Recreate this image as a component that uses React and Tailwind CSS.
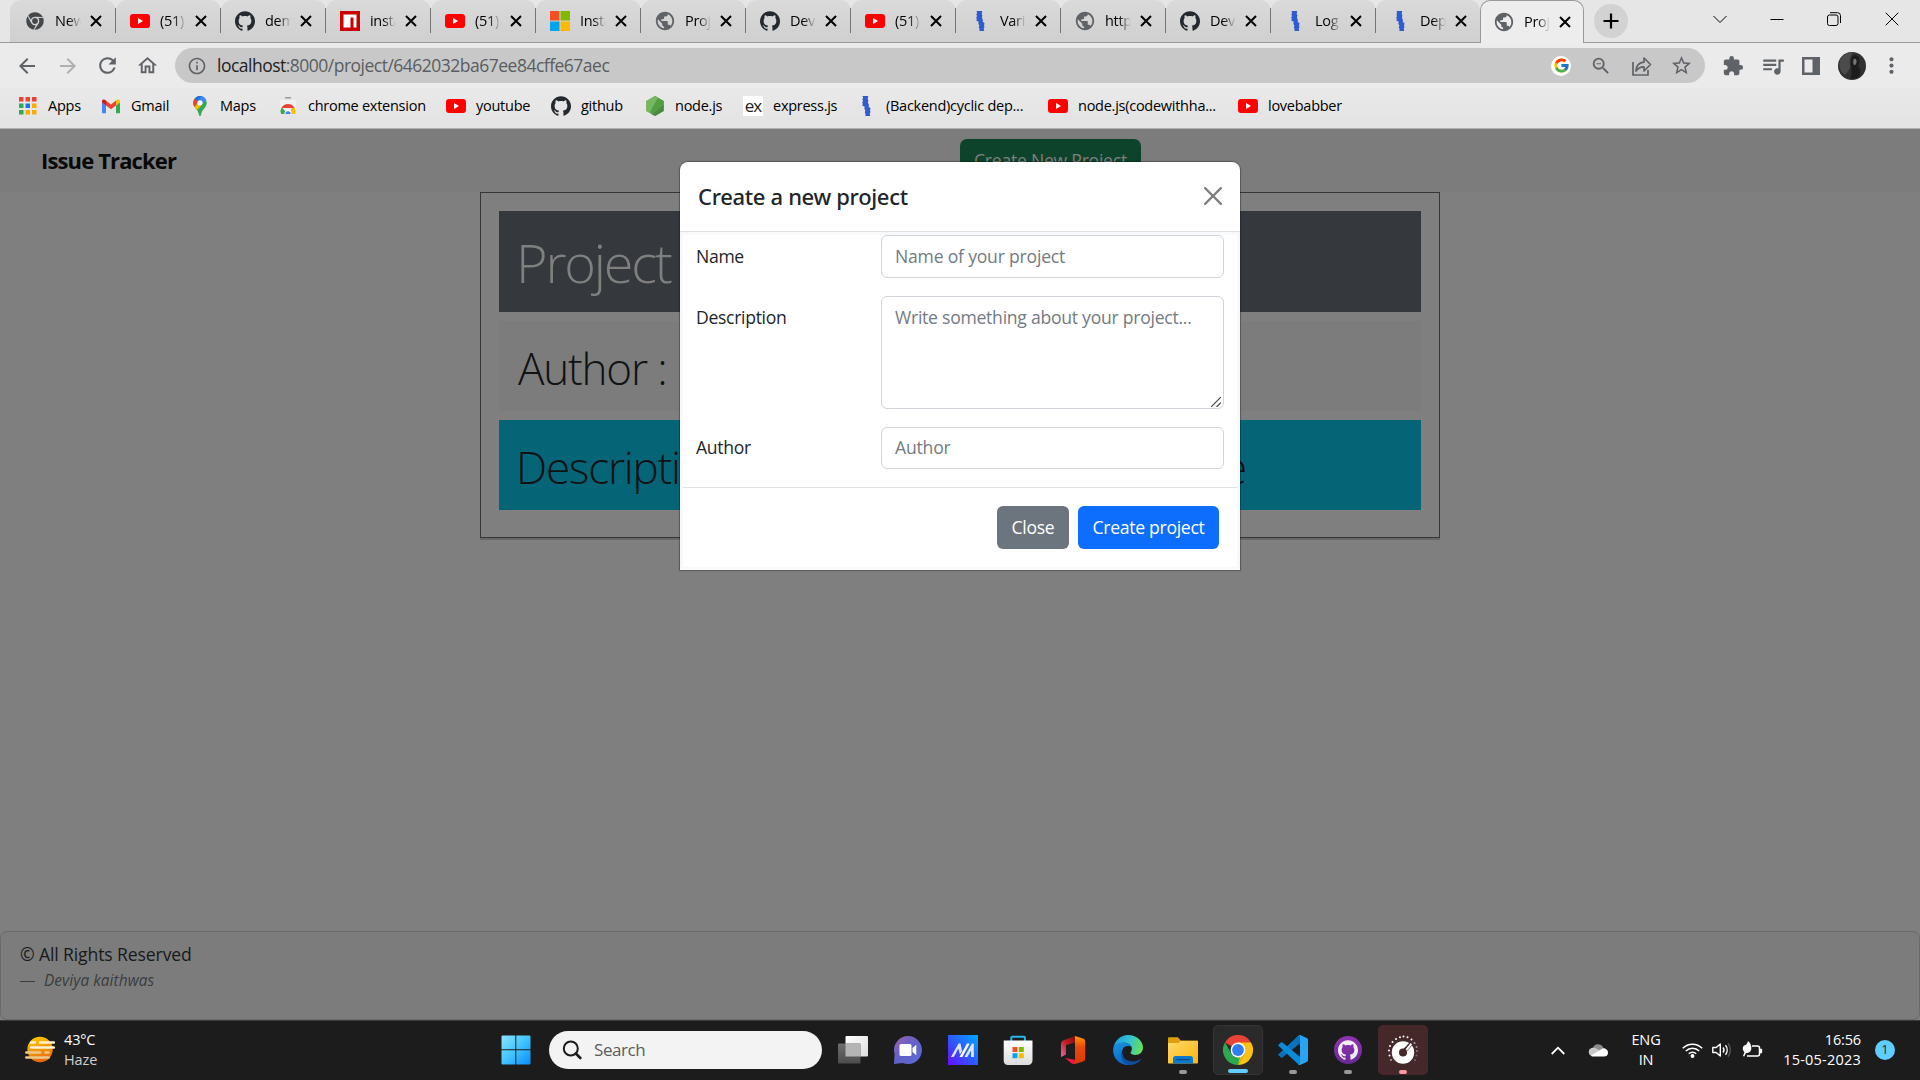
import React from 'react';
import { FaChrome } from 'react-icons/fa';
import { SiGithub } from 'react-icons/si';
import { FcGoogle } from 'react-icons/fc';
import {
  MdPublic, MdArrowBack, MdArrowForward, MdRefresh, MdOutlineHome, MdInfoOutline, MdZoomOut,
  MdStarBorder, MdExtension, MdQueueMusic, MdMoreVert,
} from 'react-icons/md';

/* ---------- small brand icons ---------- */

const YouTube = () => (
  <svg width="20" height="20" viewBox="0 0 20 20">
    <rect x="0" y="3" width="20" height="14" rx="3" fill="#f00" />
    <path d="M8 7l5 3-5 3z" fill="#fff" />
  </svg>
);

const Npm = () => (
  <svg width="20" height="20" viewBox="0 0 20 20">
    <rect width="20" height="20" fill="#cb0000" />
    <path d="M3.5 3.5h13v13h-3v-10h-3v10h-7z" fill="#fff" />
  </svg>
);

const Microsoft = () => (
  <svg width="20" height="20" viewBox="0 0 20 20">
    <rect width="9.5" height="9.5" fill="#f25022" />
    <rect x="10.5" width="9.5" height="9.5" fill="#7fba00" />
    <rect y="10.5" width="9.5" height="9.5" fill="#00a4ef" />
    <rect x="10.5" y="10.5" width="9.5" height="9.5" fill="#ffb900" />
  </svg>
);

const Pen = () => (
  <svg width="20" height="20" viewBox="0 0 20 20">
    <path d="M6.5 0h5.700l-.5 3 .7 1.500-.5 2 1 2.500-.2 2 1.800 1-.5 2.500.5 1.500-.8 1.500.5 2.500H9.400l.2-2-.8-1.500.6-2-1-1.500.2-2.500-2.300-.8.500-1.700-.6-1.500.9-1.500-.8-1.500.8-1.500z" fill="#2f5bd0" />
  </svg>
);

const Globe = () => <MdPublic size={22} className="-m-px text-[#5f6368]" />;
const Github = () => <SiGithub size={20} className="text-[#24292f]" />;
const ChromeMono = () => <FaChrome size={18} className="text-[#45484b]" />;

const AppsGrid = () => (
  <svg width="18" height="18" viewBox="0 0 18 18">
    {[
      [0, 0, '#ea4335'], [6.5, 0, '#ea4335'], [13, 0, '#ea4335'],
      [0, 6.5, '#34a853'], [6.5, 6.5, '#1a73e8'], [13, 6.5, '#fbab04'],
      [0, 13, '#34a853'], [6.5, 13, '#fbab04'], [13, 13, '#fbab04'],
    ].map(([x, y, c]) => <rect key={`${x}-${y}`} x={x} y={y} width="4.5" height="4.5" fill={c} />)}
  </svg>
);

const Gmail = () => (
  <svg width="20" height="20" viewBox="0 0 20 20">
    <path d="M1 6v10.2c0 .6.4 1 1 1h3V9.4z" fill="#4285f4" />
    <path d="M19 6v10.2c0 .6-.4 1-1 1h-3V9.4z" fill="#34a853" />
    <path d="M5 4.6v4.8l5 3.8 5-3.8V4.6l-5 3.8z" fill="#ea4335" />
    <path d="M1 5v1.4l4 3V4.6l-.9-.7C2.800 3 1 3.600 1 5z" fill="#c5221f" />
    <path d="M19 5v1.400l-4 3V4.600l.9-.7C17.200 3 19 3.600 19 5z" fill="#fbbc04" />
  </svg>
);

const Maps = () => (
  <svg width="20" height="20" viewBox="0 0 20 20">
    <path d="M10 0a6.800 6.800 0 0 1 6.800 6.800c0 4.800-5 6.200-5.800 12.400-.2 1-1.800 1-2 0C8.200 13 3.200 11.600 3.200 6.800A6.800 6.800 0 0 1 10 0z" fill="#34a853" />
    <path d="M4.600 11C3.600 9.600 3.200 8.500 3.200 6.800c0-1.700.6-3.200 1.600-4.400l3.600 3z" fill="#ea4335" />
    <path d="M4.800 2.400A6.800 6.800 0 0 1 12 .3L8 5.200z" fill="#1a73e8" />
    <path d="M12 .3c1.700.5 3.200 1.700 4 3.300l-4.200 5-3.400-3.800z" fill="#4285f4" />
    <path d="M4.600 11l4-5 3.200 3L6.900 14c-.9-1.200-1.700-2-2.300-3z" fill="#fbbc04" />
    <circle cx="10" cy="6.800" r="2.600" fill="#fff" />
  </svg>
);

const WebStore = () => (
  <svg width="20" height="20" viewBox="0 0 20 20">
    <rect x="7" y="1" width="6" height="1.500" fill="#9a9a9a" />
    <rect x="2" y="4" width="16" height="14" fill="#f0f0f0" />
    <path d="M3 18a7 7 0 0 1 .8-6.500L8 16v2z" fill="#34a853" />
    <path d="M3.500 12a7.200 7.200 0 0 1 13 0z" fill="#ea4335" />
    <path d="M12 18l1.500-6h3.200a7 7 0 0 1 .6 6z" fill="#fbbc04" />
    <path d="M3.500 12l3 5h-3.500a7 7 0 0 1 .5-5z" fill="#34a853" />
    <path d="M6.500 18a3.600 3.600 0 1 1 7 0z" fill="#fff" />
    <path d="M7.300 18a2.700 2.700 0 1 1 5.400 0z" fill="#4285f4" />
  </svg>
);

const NodeJs = () => (
  <svg width="20" height="20" viewBox="0 0 20 20">
    <path d="M10 0l8.700 5v10L10 20l-8.700-5V5z" fill="#5fa04e" />
    <path d="M10 0l8.700 5v5L8 19l-2-1.300z" fill="#539e43" />
    <path d="M1.300 5L10 0l3 1.700L4.500 16.800 1.300 15z" fill="#75b85f" />
    <path d="M18.700 9v6L10 20l-2.500-1.500z" fill="#4a8a3e" />
  </svg>
);

const Express = () => (
  <span className="flex h-5 w-5 items-center justify-center bg-white text-[17px] leading-none tracking-[-0.05em] text-[#222]">
    <span className="-mt-0.5">ex</span>
  </span>
);

/* ---------- browser chrome ---------- */

const tabs = [
  ['New', ChromeMono], ['(51)', YouTube], ['dem', Github], ['insta', Npm], ['(51)', YouTube],
  ['Insta', Microsoft], ['Proj', Globe], ['Dev', Github], ['(51)', YouTube], ['Vari', Pen],
  ['http', Globe], ['Dev', Github], ['Log', Pen], ['Dep', Pen],
];

const fade = '[mask-image:linear-gradient(to_right,#000_50%,transparent_100%)]';

function TabBody({ title, Icon }) {
  return (
    <>
      <span className="flex h-5 w-5 shrink-0 items-center justify-center"><Icon /></span>
      <span className={`ml-[10px] w-[26px] shrink-0 overflow-hidden whitespace-nowrap text-[14.5px] tracking-[-0.02em] ${fade}`}>{title}</span>
      <svg width="12" height="12" viewBox="0 0 12 12" stroke="#000" strokeWidth="2" className="ml-[9px] mt-px shrink-0"><path d="M1 1l10 10M11 1L1 11" /></svg>
    </>
  );
}

function TabStrip() {
  return (
    <div className="relative flex h-[43px] bg-[#e6e6e6] pl-[10px]">
      <div className="absolute inset-x-0 bottom-0 h-px bg-[#9a9a9a]" />
      {tabs.map(([title, Icon], i) => (
        <div
          key={i}
          className={`flex h-[42px] shrink-0 items-center rounded-t-[11px] bg-linear-to-b from-[#dadada] to-[#cfcfcf] pb-px ${
            i === 0 ? 'w-[106px] pl-[15px]' : i === 13 ? 'w-[104px] pl-[14px]' : 'w-[105px] pl-[14px]'
          }`}
        >
          <TabBody title={title} Icon={Icon} />
          {i < 13 && <span className="ml-auto h-[25px] w-px bg-[#747474]" />}
        </div>
      ))}
      <div className="relative flex h-[43px] w-[104px] shrink-0 items-center rounded-t-[10px] border border-b-0 border-[#9a9a9a] bg-[#ededed] pb-px pl-[13px]">
        <TabBody title="Proj" Icon={Globe} />
      </div>
      <div className="ml-[10px] mt-1 flex h-[34px] w-[34px] items-center justify-center rounded-full bg-[#d2d2d2]">
        <svg width="16" height="16" viewBox="0 0 16 16" stroke="#000" strokeWidth="2.200"><path d="M8 .5v15M.5 8h15" /></svg>
      </div>
      <div className="ml-auto mr-[21px] flex h-[38px] items-center text-black">
        <svg width="14" height="14" viewBox="0 0 14 14" fill="none" stroke="currentColor"><path d="M.5 4l6.500 6.500L13.500 4" /></svg>
        <svg width="14" height="14" viewBox="0 0 14 14" fill="none" stroke="currentColor" className="ml-[43px]"><path d="M.5 7.500h13" /></svg>
        <svg width="14" height="14" viewBox="0 0 14 14" fill="none" stroke="currentColor" className="ml-[43px]"><rect x=".5" y="3" width="10.500" height="10.500" rx="2" /><path d="M3 .7h7.500a3 3 0 0 1 3 3V11" /></svg>
        <svg width="14" height="14" viewBox="0 0 14 14" fill="none" stroke="currentColor" className="ml-[44px]"><path d="M.7.7l12.600 12.600M13.300.7L.7 13.300" /></svg>
      </div>
    </div>
  );
}

function Toolbar() {
  return (
    <div className="flex h-[45px] items-center bg-[#ebebeb] text-[#5f6368]">
      <MdArrowBack size={24} className="ml-[15px]" />
      <MdArrowForward size={24} className="ml-[17px] text-[#b0b0b0]" />
      <MdRefresh size={25} className="ml-[15px]" />
      <MdOutlineHome size={23} className="ml-[16px]" />
      <div className="ml-[16px] flex h-[35px] w-[1530px] shrink-0 items-center rounded-full bg-[#c8c8c8] pl-[12px]">
        <MdInfoOutline size={20} />
        <span className="ml-[10px] text-[17.5px] tracking-[-0.029em] text-[#5a5d61]">
          <span className="text-[#222]">localhost</span>:8000/project/6462032ba67ee84cffe67aec
        </span>
        <span className="ml-auto flex h-5 w-5 items-center justify-center rounded-full bg-white"><FcGoogle size={17} /></span>
        <MdZoomOut size={22} className="ml-[19px]" />
        <svg width="22" height="22" viewBox="0 0 22 22" fill="none" stroke="currentColor" strokeWidth="1.700" className="ml-[18px]">
          <path d="M3 7v13h15v-5" />
          <path d="M6 16c.3-5.500 3-8.500 8-8.800V3l6.500 6.500L14 16v-4.200c-4-.1-6 1.200-8 4.200z" strokeLinejoin="round" />
        </svg>
        <MdStarBorder size={23} className="ml-[18px] mr-[12px]" />
      </div>
      <MdExtension size={22} className="ml-[17px]" />
      <MdQueueMusic size={26} className="ml-[16px]" />
      <svg width="18" height="18" viewBox="0 0 18 18" className="ml-[16px]"><path d="M0 0h18v18H0zM2.500 2.500v13h8v-13z" fill="currentColor" fillRule="evenodd" /></svg>
      <svg width="28" height="28" viewBox="0 0 28 28" className="ml-[18px]">
        <circle cx="14" cy="14" r="14" fill="#303030" />
        <path d="M5 4c4-4 8-4 10-4-3 5-4 9-3 13s-3 7-5 10C1 19-1 10 5 4z" fill="#4b4b4b" />
        <path d="M14 5c2-3 6-2 7 1s0 6-1 8c3 3 3 7 1 11-3 2-7 2-9 1 3-5 1-9 1-13 0-3 0-5 1-8z" fill="#1c1c1c" />
        <path d="M16 7c1.500-1 3 1 2.500 3.500S16 14 15.500 12 15 8 16 7z" fill="#777" />
      </svg>
      <MdMoreVert size={25} className="ml-[13px]" />
    </div>
  );
}

const bookmarks = [
  [AppsGrid, 'Apps', 'w-[83px]'], [Gmail, 'Gmail', 'w-[89px]'], [Maps, 'Maps', 'w-[88px]'],
  [WebStore, 'chrome extension', 'w-[168px]'], [YouTube, 'youtube', 'w-[105px]'], [Github, 'github', 'w-[94px]'],
  [NodeJs, 'node.js', 'w-[98px]'], [Express, 'express.js', 'w-[113px]'], [Pen, '(Backend)cyclic dep...', 'w-[192px]'],
  [YouTube, 'node.js(codewithha...', 'w-[190px]'], [YouTube, 'lovebabber', 'w-[120px]'],
];

function Bookmarks() {
  return (
    <div className="flex h-[41px] items-center border-b border-[#b0b0b0] bg-linear-to-b from-[#e9e9e9] to-[#e3e3e3] pb-1 pl-[18px]">
      {bookmarks.map(([Icon, label, w], i) => (
        <div key={i} className={`flex shrink-0 items-center gap-[10px] ${w}`}>
          <span className="flex w-5 shrink-0 items-center justify-center"><Icon /></span>
          <span className="whitespace-nowrap text-[14.5px] tracking-[-0.018em] text-black">{label}</span>
        </div>
      ))}
    </div>
  );
}

/* ---------- page ---------- */

function Page() {
  return (
    <div className="flex h-[891px] flex-col bg-[#7f7f7f] text-[#101214]">
      <div className="flex h-[63px] shrink-0 items-start bg-[#7c7c7c] pl-[41px]">
        <div className="mt-[15px] w-[919px] text-[22px] font-bold leading-[33px] tracking-[-0.039em] text-[#080808]">Issue Tracker</div>
        <div className="mt-[10px] h-[42px] w-[181px] rounded-[7px] bg-[#0d432a] text-center text-[17.6px] leading-[42px] tracking-[-0.014em] text-[#7f7f7f]">Create New Project</div>
      </div>
      <div className="mx-auto flex h-[346px] w-[960px] shrink-0 flex-col border border-[#34373a] px-[18px] pt-[18px] font-light shadow-[0_2px_0_#686868]">
        <div className="h-[101px] bg-[#35393e] pl-[17px] text-[54px] leading-[103px] tracking-[-0.040em] text-[#7f7f7f]">Project</div>
        <div className="mt-[9px] h-[90px] bg-[#7c7c7c] pl-[19px] text-[44px] leading-[95px] tracking-[-0.027em]">Author :</div>
        <div className="mt-[9px] flex h-[90px] justify-between bg-[#056577] pl-[17px] pr-[175px] text-[44px] leading-[95px] tracking-[-0.027em]">
          <span>Description :</span><span>Issue Tracker website</span>
        </div>
      </div>
      <div className="mt-auto h-[89px] rounded-[7px] border border-[#6a6a6a] bg-[#7c7c7c] pl-[19px] pt-[9px]">
        <div className="text-[17.6px] leading-[26px] tracking-[-0.007em] text-[#17191b]">© All Rights Reserved</div>
        <div className="flex items-center text-[15.400px] leading-[28px] tracking-[0.005em] text-[#3a3d40]">
          <span className="h-px w-[15px] bg-[#3a3d40]" /><span className="ml-[9px] italic">Deviya kaithwas</span>
        </div>
      </div>
    </div>
  );
}

const field = 'w-[343px] shrink-0 rounded-[6px] border border-[#ced4da] bg-white pl-[13px] text-[#737a81] tracking-[-0.012em]';

function Modal() {
  return (
    <div className="absolute left-[680px] top-[162px] h-[408px] w-[560px] rounded-t-[8px] bg-white text-[17.6px] text-[#212529] shadow-[0_0_1px_1px_rgba(0,0,0,0.3)]">
      <div className="flex h-[70px] items-start justify-between border-b border-[#dee2e6] pl-[18px] pr-[18px]">
        <div className="pt-[17px] font-['Noto_Sans',sans-serif] text-[22px] font-medium leading-[34px] tracking-[-0.015em]">Create a new project</div>
        <svg width="18" height="18" viewBox="0 0 18 18" fill="none" stroke="#7f7f7f" strokeWidth="2.200" strokeLinecap="round" className="mt-[25px]"><path d="M1.100 1.100l15.800 15.800M16.900 1.100L1.100 16.900" /></svg>
      </div>
      <div className="h-[338px] border-[3px] border-[#f8f9fa]">
        <div className="flex h-[61px] pl-[13px] leading-[42px]">
          <div className="w-[185px] tracking-[-0.018em]">Name</div>
          <div className={`${field} h-[43px] leading-[41px]`}>Name of your project</div>
        </div>
        <div className="flex h-[131px] pl-[13px] leading-[42px]">
          <div className="w-[185px] tracking-[-0.018em]">Description</div>
          <div className={`${field} flex h-[113px] leading-[41px]`}>
            <span className="w-[316px] whitespace-nowrap tracking-[-0.015em]">Write something about your project...</span>
            <svg width="10" height="10" viewBox="0 0 10 10" stroke="#444" strokeWidth="1.200" className="mt-auto mb-[1px] shrink-0"><path d="M0 10L10 0M5.500 10L10 5.500" /></svg>
          </div>
        </div>
        <div className="flex h-[60px] pl-[13px] leading-[40px]">
          <div className="w-[185px] tracking-[-0.018em]">Author</div>
          <div className={`${field} h-[42px] leading-[39px]`}>Author</div>
        </div>
        <div className="flex justify-end gap-[9px] border-t border-[#dee2e6] pr-[18px] pt-[18px] text-center leading-[42px] tracking-[-0.017em] text-white">
          <div className="h-[43px] w-[72px] rounded-[6px] bg-[#6c757d]">Close</div>
          <div className="h-[43px] w-[141px] rounded-[6px] bg-[#0d6efd]">Create project</div>
        </div>
      </div>
    </div>
  );
}

/* ---------- taskbar icons ---------- */

const WinLogo = () => (
  <svg width="30" height="30" viewBox="0 0 30 30">
    <defs><linearGradient id="win" x1="0" y1="0" x2="1" y2="1"><stop offset="0" stopColor="#8be4ff" /><stop offset=".5" stopColor="#41c4ff" /><stop offset="1" stopColor="#0a8cf8" /></linearGradient></defs>
    <path d="M1.500.5h12.800v13.800H.5V1.500a1 1 0 0 1 1-1zM15.300.5h13.200a1 1 0 0 1 1 1v12.800H15.300zM.5 15.300h13.800v14.200H1.500a1 1 0 0 1-1-1zM15.300 15.300h14.200v13.200a1 1 0 0 1-1 1H15.300z" fill="url(#win)" />
  </svg>
);

const TaskView = () => (
  <svg width="30" height="30" viewBox="0 0 30 30">
    <defs>
      <linearGradient id="tv1" x1="0" y1="0" x2="1" y2="1"><stop offset="0" stopColor="#fff" /><stop offset="1" stopColor="#dcdcdc" /></linearGradient>
      <linearGradient id="tv2" x1="0" y1="0" x2="0" y2="1"><stop offset="0" stopColor="#6e6e6e" /><stop offset="1" stopColor="#4c4c4c" /></linearGradient>
    </defs>
    <rect x="7.500" y="1" width="22.500" height="20.500" rx="1" fill="url(#tv1)" />
    <rect x="0" y="8.500" width="22.500" height="20" rx="1" fill="url(#tv2)" />
    <rect x="7.500" y="8.500" width="15" height="13" fill="#b4b4b4" />
  </svg>
);

const Meet = () => (
  <svg width="30" height="30" viewBox="0 0 30 30">
    <defs><linearGradient id="meet" x1="0" y1="0" x2="1" y2="1"><stop offset="0" stopColor="#9a5fae" /><stop offset=".5" stopColor="#5f63c8" /><stop offset="1" stopColor="#5b6ad8" /></linearGradient></defs>
    <path d="M15 1a14 14 0 1 1-5.500 26.900L1 29l.6-10A14 14 0 0 1 15 1z" fill="url(#meet)" />
    <rect x="6.500" y="9" width="12" height="12" rx="1.500" fill="#fff" />
    <path d="M19.500 13l3.800-3.200v10.400L19.500 17z" fill="#fff" />
  </svg>
);

const MyAsus = () => (
  <svg width="30" height="30" viewBox="0 0 30 30">
    <defs><linearGradient id="asus" x1="1" y1="0" x2="0" y2="1"><stop offset="0" stopColor="#00a8ff" /><stop offset=".5" stopColor="#2b5cff" /><stop offset="1" stopColor="#6a0cff" /></linearGradient></defs>
    <rect width="30" height="30" fill="url(#asus)" />
    <path d="M3 22L10.500 8.500h2L14 16l-2 3.500-1.700-6L5.800 22z" fill="#dfe8ff" />
    <path d="M11.500 22L19 8.500h2.800L14.300 22z" fill="#fff" />
    <path d="M16.500 22L24 8.500h1.800V22h-2.700v-6.500L19.300 22z" fill="#dfe8ff" />
  </svg>
);

const Store = () => (
  <svg width="30" height="30" viewBox="0 0 30 30">
    <defs><linearGradient id="store" x1="0" y1="0" x2="0" y2="1"><stop offset="0" stopColor="#fff" /><stop offset="1" stopColor="#dcdcdc" /></linearGradient></defs>
    <path d="M8.300 7V2.500c0-.6.300-.8.800-.8h12c.5 0 .8.300.8.800V7" fill="none" stroke="#29b6e8" strokeWidth="2" />
    <path d="M.7 5.500h28.800v20a4.500 4.500 0 0 1-4.500 4.500H5a4.500 4.500 0 0 1-4.300-4.500z" fill="url(#store)" />
    <path d="M9.500 12h5v5h-5z" fill="#f25022" /><path d="M15.800 12h5v5h-5z" fill="#7fba00" />
    <path d="M9.500 18.200h5v5h-5z" fill="#00a4ef" /><path d="M15.800 18.200h5v5h-5z" fill="#ffb900" />
  </svg>
);

const Office = () => (
  <svg width="30" height="30" viewBox="0 0 30 30">
    <defs>
      <linearGradient id="of1" x1="0" y1="0" x2="0" y2="1"><stop offset="0" stopColor="#ff9a00" /><stop offset=".4" stopColor="#e8480b" /><stop offset="1" stopColor="#d83b01" /></linearGradient>
      <linearGradient id="of2" x1="1" y1="0" x2="0" y2="1"><stop offset="0" stopColor="#7a0c10" /><stop offset=".5" stopColor="#c11f22" /><stop offset="1" stopColor="#e86bb0" /></linearGradient>
    </defs>
    <path d="M17 1L5.500 5.200A4 4 0 0 0 3 9v13l5-2.500V10l9-2.500z" fill="url(#of2)" />
    <path d="M17 1l8 2.500a3 3 0 0 1 2.200 3v17a3 3 0 0 1-2.200 3L17 29z" fill="url(#of1)" />
    <path d="M7 23l10 1.800V29c-1.500.4-3-.3-4-1z" fill="#e8193c" />
  </svg>
);

const Edge = () => (
  <svg width="30" height="30" viewBox="0 0 30 30">
    <defs>
      <linearGradient id="ed1" x1="0" y1=".3" x2="1" y2=".5"><stop offset="0" stopColor="#1c9ae6" /><stop offset=".5" stopColor="#30c1d8" /><stop offset="1" stopColor="#68e055" /></linearGradient>
      <linearGradient id="ed2" x1="0" y1="0" x2=".4" y2="1"><stop offset="0" stopColor="#1a94e0" /><stop offset="1" stopColor="#0868c8" /></linearGradient>
    </defs>
    <path d="M.3 13C2 5 8 0 15 0c8.500 0 15 6 15 12.500 0 4.500-3.500 7.500-7.500 7.500-3 0-5-1.200-5-2.300 0-.7 1.400-1.500 1.400-4 0-3.500-3.600-6-8-6C5.500 7.700 2 10 .3 13z" fill="url(#ed1)" />
    <path d="M.3 13C1.500 9.500 6 7.700 10.500 7.700c4.200 0 7.500 2 8.300 4.800-1-.9-2.300-1.400-3.800-1.400-5 0-6.700 4.500-5.500 8.900C10.600 24.500 15 29 19 29.300c-1.300.5-2.700.7-4 .7C5.500 30-1 22 .3 13z" fill="url(#ed2)" />
    <path d="M9.300 16c-.8 7 5 10.500 10.700 10.500 3 0 5.500-1 7.500-2.500.5-.3.900.2.600.6C26 27.700 21.500 30 17.500 30c-6 0-9.500-6-9.500-10 0-1.500.5-2.900 1.300-4z" fill="#0f4fa0" />
  </svg>
);

const Folder = () => (
  <svg width="30" height="30" viewBox="0 0 30 30">
    <defs><linearGradient id="fol" x1="0" y1="0" x2="1" y2="1"><stop offset="0" stopColor="#ffd968" /><stop offset="1" stopColor="#fbb60d" /></linearGradient></defs>
    <path d="M0 3.500c0-.8.500-1.300 1.300-1.300h8.500l3 3.300H29c.6 0 1 .5 1 1V12H0z" fill="#dda00b" />
    <path d="M0 8h10.500l2.500-2h16c.6 0 1 .4 1 1v20.500c0 .6-.4 1-1 1H1c-.6 0-1-.4-1-1z" fill="url(#fol)" />
    <path d="M5 28.500v-5a2.500 2.500 0 0 1 2.500-2.500h15a2.500 2.500 0 0 1 2.500 2.500v5z" fill="#0b79cc" />
    <path d="M8.500 24.600h13" stroke="#0a4f94" strokeWidth="1.400" />
  </svg>
);

const Chrome = () => (
  <svg width="30" height="30" viewBox="0 0 30 30">
    <path d="M15 15L2 7.500A15 15 0 0 1 28 7.500z" fill="#ea4335" />
    <path d="M15 7.500h13A15 15 0 0 1 15 30l6.500-11.200z" fill="#fbc116" />
    <path d="M2 7.500l6.500 11.300A7.500 7.500 0 0 0 18 22l-3 8A15 15 0 0 1 2 7.500z" fill="#2da94f" />
    <path d="M21.500 18.700L15 30l-2-5 3-4z" fill="#fbc116" />
    <path d="M8.500 18.800A7.500 7.500 0 0 0 17 22.200L15 30l-4-2z" fill="#2da94f" />
    <circle cx="15" cy="15" r="7.400" fill="#fff" /><circle cx="15" cy="15" r="5.900" fill="#2f7df0" />
  </svg>
);

const VsCode = () => (
  <svg width="30" height="30" viewBox="0 0 30 30">
    <path d="M22 0v8.300L4.500 22.500c-.5.400-1 .4-1.500 0L.7 20.600c-.6-.5-.6-1.200 0-1.700L20.500.6c.4-.4.900-.6 1.500-.6z" fill="#0a71bd" />
    <path d="M22 30v-8.300L4.500 7.500c-.5-.4-1-.4-1.500 0L.7 9.400c-.6.500-.6 1.200 0 1.700l19.800 18.300c.4.400.9.600 1.500.6z" fill="#0b8ad8" />
    <path d="M22 30c-.9 0-1.700-.3-2-.9 1 .6 2 .1 2-1V1.900c0-1.100-1-1.600-2-1C20.500.3 21.200 0 22 0l6.800 3c.8.400 1.200 1 1.200 1.800v20.400c0 .8-.4 1.400-1.200 1.800z" fill="#27a5f2" />
  </svg>
);

const GithubDesktop = () => (
  <span className="flex h-7 w-7 items-center justify-center rounded-full bg-linear-to-b from-[#8f33b4] to-[#6a2a96]">
    <SiGithub size={20} className="text-[#f1edf5]" />
  </span>
);

const DialApp = () => (
  <svg width="30" height="30" viewBox="0 0 30 30">
    <circle cx="15" cy="17.500" r="11.200" fill="#fff" />
    <path d="M13.500 16l9-9.500 2.700 2.700-8.500 9.500z" fill="#44282a" />
    <path d="M15 17.500l7.700-9.500 1.400 1.400-7.600 9.400z" fill="#fff" />
    <circle cx="15" cy="17.500" r="4" fill="#44282a" />
    {[[1.500, 20.500, 1], [1, 15.500, 1], [2, 11, 1], [4.500, 7, 1], [8, 4, 1], [12, 2.300, 1], [15.500, 1.500, 1], [19.500, 2.300, 1], [23.500, 4.500, 1], [26.500, 8, .6], [28.500, 12, .5], [29, 16, .4], [28.500, 20.500, .3], [3, 25, .6], [27, 25, .3]].map(([x, y, o]) => (
      <circle key={`${x}-${y}`} cx={x} cy={y} r="1" fill="#fff" opacity={o} />
    ))}
  </svg>
);

const apps = [
  [TaskView], [Meet], [MyAsus], [Store], [Office], [Edge],
  [Folder, '', 'w-2 bg-[#999]'],
  [Chrome, 'bg-[#2a2a2a] border border-[#353535]', 'w-5 bg-[#60cdff]'],
  [VsCode, '', 'w-2 bg-[#999]'],
  [GithubDesktop, '', 'w-2 bg-[#999]'],
  [DialApp, 'bg-[#44282a]', 'w-2 bg-[#ff99a4]'],
];

function Taskbar() {
  return (
    <div className="flex h-[60px] items-center border-t border-[#3c3c3c] bg-[#1c1c1c] pb-px text-[14.5px] text-white">
      <div className="flex w-[501px] items-center pl-[25px]">
        <svg width="30" height="30" viewBox="0 0 30 30">
          <defs><linearGradient id="sun" x1="0" y1="0" x2=".3" y2="1"><stop offset="0" stopColor="#ffd000" /><stop offset="1" stopColor="#ee6a0a" /></linearGradient></defs>
          <circle cx="15" cy="14.500" r="12.700" fill="url(#sun)" />
          <g strokeWidth="2.400" strokeLinecap="round">
            <path d="M6 7.500h4M15 7.500h14M6 12.500h23" stroke="#fff3cf" />
            <path d="M1.200 17.500h14M20.500 17.500h3M1.200 22.500h22.500" stroke="#e8c98a" />
          </g>
        </svg>
        <div className="ml-[9px] leading-[20px]"><div className="tracking-[-0.01em]">43°C</div><div className="tracking-[-0.005em] text-[#cfcfcf]">Haze</div></div>
      </div>
      <WinLogo />
      <div className="ml-[18px] flex h-[38px] w-[273px] items-center rounded-full bg-[#f3f3f3] pl-[13px]">
        <svg width="20" height="20" viewBox="0 0 20 20" fill="none" stroke="#1c1c1c" strokeWidth="2" strokeLinecap="round"><circle cx="8.800" cy="8.500" r="7" /><path d="M13.800 13.500l4.500 4.500" strokeWidth="2.600" /></svg>
        <span className="ml-3 text-[17px] tracking-[-0.025em] text-[#5c5c5c]">Search</span>
      </div>
      <div className="ml-[6px] flex gap-[5px]">
        {apps.map(([Icon, box = '', mark], i) => (
          <div key={i} className={`relative flex h-[50px] w-[50px] items-center justify-center rounded-[5px] ${box}`}>
            <Icon />
            {mark && <span className={`absolute bottom-[1px] left-1/2 h-1 -translate-x-1/2 rounded-full ${mark}`} />}
          </div>
        ))}
      </div>
      <svg width="14" height="9" viewBox="0 0 14 9" fill="none" stroke="#fff" strokeWidth="1.800" className="ml-[123px]"><path d="M.7 8L7 1.700 13.300 8" /></svg>
      <svg width="20" height="14" viewBox="0 0 20 14" className="ml-[23px]">
        <path d="M5 5a5.500 5.500 0 0 1 10-1l1 4-11 2z" fill="#8c8c8c" />
        <path d="M4 13a4.200 4.200 0 0 1-.5-8c2-.8 4.200-.2 5.500 1l4 2-4 5z" fill="#c9c9c9" />
        <path d="M3 12.500L14.500 5.500c2-.8 5.500 1 5.500 4s-2 4-4 4H4.500c-.7 0-1.200-.3-1.500-1z" fill="#fff" />
      </svg>
      <div className="ml-[21px] w-[34px] text-center leading-[20px] tracking-[-0.01em]"><div>ENG</div><div>IN</div></div>
      <svg width="21" height="16" viewBox="0 0 21 16" fill="none" stroke="#fff" strokeWidth="1.500" className="ml-[19px]">
        <path d="M.8 6.300a13.700 13.700 0 0 1 19.400 0M3.800 9a9.400 9.400 0 0 1 13.400 0M6.800 11.800a5.300 5.300 0 0 1 7.400 0" /><circle cx="10.500" cy="14" r="1.200" fill="#fff" />
      </svg>
      <svg width="21" height="18" viewBox="0 0 21 18" fill="none" stroke="#fff" strokeWidth="1.400" className="ml-[9px]">
        <path d="M.8 6.500v5h3.400L8.300 15V3L4.200 6.500z" strokeLinejoin="round" /><path d="M11 6.500a4 4 0 0 1 0 5M13.500 4.300a7.500 7.500 0 0 1 0 9.400" /><path d="M16 2.200a11 11 0 0 1 0 13.600" stroke="#555" />
      </svg>
      <svg width="21" height="18" viewBox="0 0 21 18" className="ml-[9px]">
        <path d="M10 5h5.500a2 2 0 0 1 2 2v6a2 2 0 0 1-2 2H5" fill="none" stroke="#fff" strokeWidth="1.500" />
        <path d="M18 7.700h1.200c.7 0 1 .4 1 1v2.500c0 .6-.3 1-1 1H18z" fill="#fff" />
        <path d="M6 0c3 2.500 4 6 3 9-.7 2-3 3.500-5 3l-1.800 3.500-1.200-.5L2.500 11C-.5 8.500 1 4.500 3 4.300 4.500 3.800 5.500 2 6 0z" fill="#fff" />
      </svg>
      <div className="ml-auto text-right leading-[20px] tracking-[0.015em]"><div className="tracking-[-0.01em]">16:56</div><div>15-05-2023</div></div>
      <div className="ml-[14px] mr-[25px] flex h-5 w-5 items-center justify-center rounded-full bg-[#60cdff] text-[12px] text-[#1c1c1c]">1</div>
    </div>
  );
}

export default function App() {
  return (
    <div className="relative h-[1080px] w-[1920px] overflow-hidden font-['Open_Sans','Noto_Sans',sans-serif]">
      <TabStrip />
      <Toolbar />
      <Bookmarks />
      <Page />
      <Taskbar />
      <Modal />
    </div>
  );
}
